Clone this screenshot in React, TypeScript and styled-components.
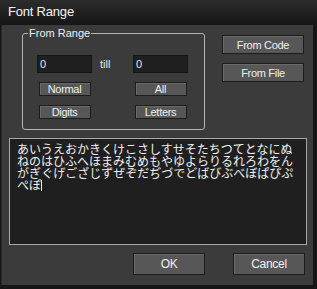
import styled, { createGlobalStyle } from "styled-components";

const GlobalStyle = createGlobalStyle`
  html, body {
    margin: 0;
    padding: 0;
    background: #161616;
  }
  body {
    font-family: "Liberation Sans", Arial, sans-serif;
    width: 317px;
    height: 289px;
    overflow: hidden;
  }
`;

const kanaLines = [
  "あいうえおかきくけこさしすせそたちつてとなにぬ",
  "ねのはひふへほまみむめもやゆよらりるれろわをん",
  "がぎぐげござじずぜぞだぢづでどばびぶべぼぱぴぷ",
  "ぺぽ",
];

const App = () => {
  return (
    <>
      <GlobalStyle />
      <StWindow>
        <StTitleBar>Font Range</StTitleBar>
        <StBody>
          <StTopRow>
            <StGroup>
              <StLegend>From Range</StLegend>
              <StGrid>
                <StInput>0</StInput>
                <StTill>till</StTill>
                <StInput>0</StInput>
                <StSmallButton>Normal</StSmallButton>
                <span />
                <StSmallButton>All</StSmallButton>
                <StSmallButton>Digits</StSmallButton>
                <span />
                <StSmallButton>Letters</StSmallButton>
              </StGrid>
            </StGroup>
            <StSideColumn>
              <StSideButton>From Code</StSideButton>
              <StSideButton>From File</StSideButton>
            </StSideColumn>
          </StTopRow>
          <StTextArea>
            {kanaLines.map((line, i) => (
              <StLine key={i}>
                {line}
                {i === kanaLines.length - 1 && <StCaret />}
              </StLine>
            ))}
          </StTextArea>
          <StFooter>
            <StFooterButton>OK</StFooterButton>
            <StFooterButton>Cancel</StFooterButton>
          </StFooter>
        </StBody>
      </StWindow>
    </>
  );
};

export default App;

const StWindow = styled.div`
  display: flex;
  flex-direction: column;
  width: 312px;
  height: 285px;
  margin-left: 1px;
  background: #3b3b3b;
  border-left: 1px solid #2a2a2a;
  box-sizing: border-box;
`;

const StTitleBar = styled.div`
  height: 25px;
  box-sizing: border-box;
  padding: 4px 0 0 8px;
  margin-left: -2px;
  width: 317px;
  background: linear-gradient(#2c2c2c, #1f1f1f 60%, #151515);
  color: #f4f4f4;
  font-size: 13px;
  letter-spacing: -0.2px;
`;

const StBody = styled.div`
  display: flex;
  flex-direction: column;
  padding: 0 6px 0 7px;
`;

const StTopRow = styled.div`
  display: flex;
  align-items: flex-start;
  margin-top: 8px;
`;

const StGroup = styled.div`
  position: relative;
  margin-left: 13px;
  width: 183px;
  height: 97px;
  box-sizing: border-box;
  border: 1px solid #b4b4b4;
  border-radius: 3px;
`;

const StLegend = styled.span`
  position: absolute;
  top: -7px;
  left: 5px;
  padding: 0 1px;
  background: #3b3b3b;
  color: #f0f0f0;
  font-size: 11px;
  line-height: 12px;
`;

const StGrid = styled.div`
  display: grid;
  grid-template-columns: 55px 41px 55px;
  grid-template-rows: 18px 14px 14px;
  row-gap: 9px;
  padding: 21px 0 0 14px;
`;

const StInput = styled.div`
  box-sizing: border-box;
  height: 18px;
  background: #1f1f1f;
  border: 1px solid #151515;
  color: #e8e8e8;
  font-size: 11px;
  line-height: 16px;
  padding-left: 2px;
`;

const StTill = styled.div`
  color: #e8e8e8;
  font-size: 11px;
  line-height: 18px;
  padding-left: 8px;
`;

const StButtonBase = styled.div`
  box-sizing: border-box;
  display: flex;
  align-items: center;
  justify-content: center;
  background: #575757;
  border: 1px solid #1c1c1c;
  box-shadow: inset 1px 1px 0 #6a6a6a;
  color: #f0f0f0;
  letter-spacing: -0.3px;
`;

const StSmallButton = styled(StButtonBase)`
  justify-self: center;
  width: 52px;
  height: 14px;
  font-size: 11px;
`;

const StSideColumn = styled.div`
  display: flex;
  flex-direction: column;
  gap: 9px;
  margin: 2px 0 0 17px;
`;

const StSideButton = styled(StButtonBase)`
  width: 82px;
  height: 19px;
  font-size: 11px;
`;

const StTextArea = styled.div`
  margin-top: 8px;
  height: 107px;
  box-sizing: border-box;
  border: 1px solid #a8a8a8;
  background: #1f1f1f;
  padding: 4px 0 0 7px;
  color: #f2f2f2;
  font-family: "Noto Sans CJK JP", sans-serif;
  font-size: 12px;
  line-height: 12px;
`;

const StLine = styled.div`
  display: flex;
  align-items: center;
  height: 12px;
  white-space: nowrap;
`;

const StCaret = styled.span`
  display: inline-block;
  width: 1px;
  height: 11px;
  background: #f2f2f2;
  margin-left: 0;
`;

const StFooter = styled.div`
  display: flex;
  justify-content: flex-end;
  gap: 28px;
  margin-top: 8px;
  padding-right: 2px;
`;

const StFooterButton = styled(StButtonBase)`
  width: 72px;
  height: 22px;
  font-size: 12px;
`;
